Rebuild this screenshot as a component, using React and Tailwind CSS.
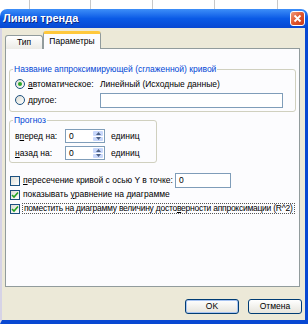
import React from "react";

function Radio({ checked }) {
  return (
    <span className="w-[10px] h-[10px] rounded-full border border-[#1c5180] bg-gradient-to-br from-[#dcdcd4] to-white flex items-center justify-center shrink-0">
      {checked && <span className="w-[4px] h-[4px] rounded-full bg-[#2aa82a]" />}
    </span>
  );
}

function Check({ checked }) {
  return (
    <span className="w-[10px] h-[10px] border border-[#1c5180] bg-gradient-to-br from-[#dcdcd4] to-white flex items-center justify-center shrink-0">
      {checked && (
        <svg width="8" height="8" viewBox="0 0 8 8">
          <path d="M1 4 L3 6 L7 1.5" fill="none" stroke="#21a121" strokeWidth="1.6" />
        </svg>
      )}
    </span>
  );
}

function Spin({ value }) {
  return (
    <div className="w-[40px] h-[14px] border border-[#7f9db9] bg-white flex items-stretch">
      <span className="flex-1 pl-[3px] leading-[12px]">{value}</span>
      <div className="w-[12px] flex flex-col gap-px p-px">
        <div className="flex-1 bg-[#c9d8fb] rounded-[1px] flex items-center justify-center">
          <svg width="5" height="3" viewBox="0 0 5 3">
            <path d="M0 3 L2.5 0 L5 3 Z" fill="#4d6185" />
          </svg>
        </div>
        <div className="flex-1 bg-[#c9d8fb] rounded-[1px] flex items-center justify-center">
          <svg width="5" height="3" viewBox="0 0 5 3">
            <path d="M0 0 L2.5 3 L5 0 Z" fill="#4d6185" />
          </svg>
        </div>
      </div>
    </div>
  );
}

export default function App() {
  return (
    <div className="w-[308px] h-[324px] bg-white overflow-hidden font-['Liberation_Sans',Arial,sans-serif] text-[8.5px] text-black whitespace-nowrap">
      {/* spreadsheet behind the dialog */}
      <div className="flex h-[9px]">
        <div className="w-[30px] border-r border-[#c8c8c8]" />
        <div className="w-[61px] border-r border-[#c8c8c8]" />
        <div className="w-[62px] border-r border-[#c8c8c8]" />
        <div className="w-[62px] border-r border-[#c8c8c8]" />
        <div className="w-[63px] border-r border-[#c8c8c8]" />
      </div>

      {/* title bar */}
      <div className="h-[19px] rounded-t-[7px] bg-gradient-to-b from-[#3d8ef8] via-[#0a5ae6] to-[#0848d2] flex items-center justify-between pl-[3px] pr-[3px]">
        <span className="text-white font-bold text-[11px] [text-shadow:1px_1px_0_#0a2a8a]">Линия тренда</span>
        <span className="w-[15px] h-[15px] rounded-[3px] border border-white bg-gradient-to-br from-[#f09a7a] via-[#e0552c] to-[#c8391a] flex items-center justify-center">
          <svg width="9" height="9" viewBox="0 0 9 9">
            <path d="M1.5 1.5 L7.5 7.5 M7.5 1.5 L1.5 7.5" stroke="white" strokeWidth="1.8" />
          </svg>
        </span>
      </div>

      {/* body */}
      <div className="h-[296px] bg-[#ece9d8] border-l-[2px] border-l-[#d6d3e6] border-r-[3px] border-r-[#0848d2] border-b-[4px] border-b-[#0848d2] flex flex-col">
        {/* tabs */}
        <div className="flex items-end h-[21px] pl-[3px] relative z-10 -mb-px">
          <div className="w-[38px] h-[14px] border border-b-0 border-[#919b9c] rounded-t-[3px] bg-gradient-to-b from-white to-[#ecebe6] flex items-center justify-center">
            Тип
          </div>
          <div className="w-[58px] h-[18px] border border-b-0 border-[#919b9c] border-t-[3px] border-t-[#ffc83c] rounded-t-[3px] bg-[#fcfcfe] flex items-center justify-center">
            Параметры
          </div>
        </div>

        {/* tab panel */}
        <div className="ml-[3px] w-[295px] h-[239px] border border-[#919b9c] bg-[#fcfcfe] flex flex-col">
          <div className="mt-[20px] ml-[3px] w-[287px] border border-[#d0d0bf] rounded-[3px] pl-[5px] pb-[3px]">
            <div className="-mt-[6px] -ml-[2px] w-fit bg-[#fcfcfe] px-[1px] leading-[11px] text-[#0046d5]">
              Название аппроксимирующей (сглаженной) кривой
            </div>
            <div className="flex items-center h-[14px] mt-[2px]">
              <div className="w-[85px] flex items-center gap-[3px]">
                <Radio checked />
                <span><u>а</u>втоматическое:</span>
              </div>
              <span>Линейный (Исходные данные)</span>
            </div>
            <div className="flex items-center h-[16px] mt-[1px]">
              <div className="w-[85px] flex items-center gap-[3px]">
                <Radio />
                <span><u>д</u>ругое:</span>
              </div>
              <div className="w-[183px] h-[15px] border border-[#7f9db9] bg-white" />
            </div>
          </div>

          <div className="mt-[8px] ml-[3px] w-[148px] border border-[#d0d0bf] rounded-[3px] pl-[5px] pb-[1px]">
            <div className="-mt-[6px] -ml-[2px] w-fit bg-[#fcfcfe] px-[1px] leading-[11px] text-[#0046d5]">
              Прогноз
            </div>
            <div className="flex items-center h-[16px] mt-[2px]">
              <span className="w-[50px]">в<u>п</u>еред на:</span>
              <Spin value="0" />
              <span className="ml-[6px]">единиц</span>
            </div>
            <div className="flex items-center h-[16px] mt-[1px]">
              <span className="w-[50px]"><u>н</u>азад на:</span>
              <Spin value="0" />
              <span className="ml-[6px]">единиц</span>
            </div>
          </div>

          <div className="mt-[10px] ml-[4px] flex flex-col">
            <div className="flex items-center h-[15px]">
              <Check />
              <span className="ml-[3px] w-[152px]"><u>п</u>ересечение кривой с осью Y в точке:</span>
              <div className="w-[56px] h-[15px] border border-[#7f9db9] bg-white pl-[3px] leading-[13px]">0</div>
            </div>
            <div className="flex items-center h-[13px]">
              <Check checked />
              <span className="ml-[3px]">показывать <u>у</u>равнение на диаграмме</span>
            </div>
            <div className="flex items-center h-[13px] mt-px">
              <Check checked />
              <span className="ml-[2px] px-px border border-dotted border-[#555] leading-[9px] tracking-[-0.25px]">
                поместить на диаграмму величину досто<u>в</u>ерности аппроксимации (R^2)
              </span>
            </div>
          </div>
        </div>

        {/* buttons */}
        <div className="flex justify-end gap-[9px] mt-[12px] pr-[3px]">
          <button className="w-[54px] h-[15px] rounded-[3px] border border-[#003c74] bg-gradient-to-b from-white to-[#e6e4dc] shadow-[inset_0_0_0_1px_#a8c4f2] leading-[13px]">
            OK
          </button>
          <button className="w-[54px] h-[15px] rounded-[3px] border border-[#003c74] bg-gradient-to-b from-white to-[#e6e4dc] leading-[13px]">
            Отмена
          </button>
        </div>
      </div>
    </div>
  );
}
